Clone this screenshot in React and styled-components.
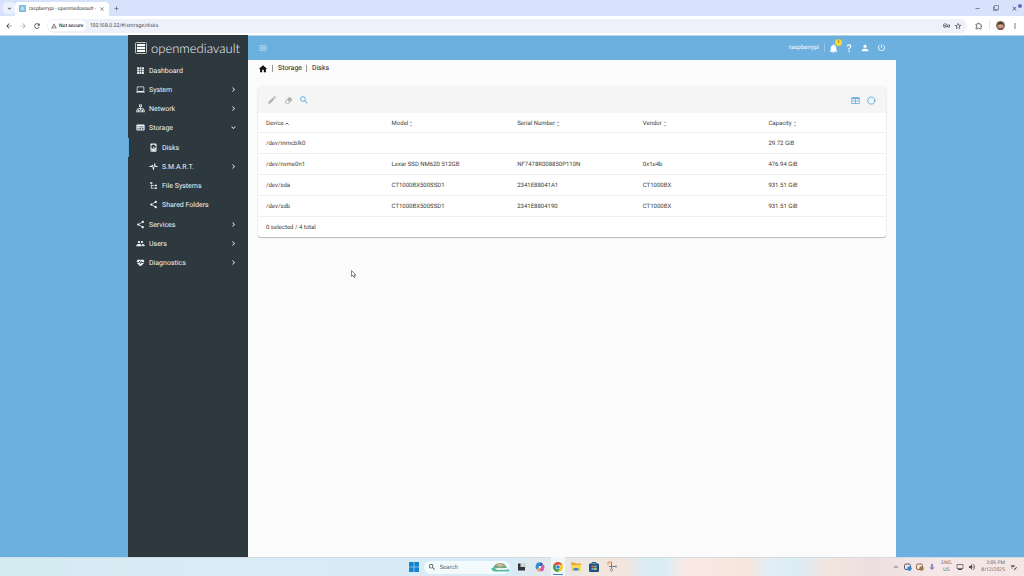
import React from "react";
import styled, { createGlobalStyle, css } from "styled-components";
import {
  MdShare, MdPeople, MdChevronRight, MdExpandMore, MdHome, MdEdit, MdSearch,
  MdNotifications, MdPerson, MdPowerSettingsNew, MdMenu, MdArrowBack,
  MdArrowForward, MdRefresh, MdStarBorder, MdMoreVert, MdExpandLess, MdClose,
  MdAdd, MdRemove, MdWarningAmber, MdOutlineExtension, MdOutlineVpnKey,
  MdQuestionMark, MdFilterNone, MdMicNone, MdVolumeUp, MdOutlineMonitor,
  MdOutlineEditNote,
} from "react-icons/md";

const GlobalStyle = createGlobalStyle`
  *, *::before, *::after { box-sizing: border-box; }
  body {
    margin: 0;
    font-family: Roboto, "Liberation Sans", sans-serif;
    font-size: 6px;
    color: #3c3c3c;
    text-rendering: geometricPrecision;
  }
  button, input { font: inherit; color: inherit; border: 0; background: none; padding: 0; margin: 0; text-rendering: inherit; }
  a { color: inherit; text-decoration: none; }
  svg { display: block; flex: none; }
`;

const Desktop = styled.div`
  display: flex;
  flex-direction: column;
  min-height: 100vh;
`;

/* ---------- Browser ---------- */
const TabStrip = styled.div`
  display: flex;
  align-items: center;
  height: 16px;
  background: #d9e2fd;
  padding: 0 3px;
`;

const TabMenu = styled.button`
  display: grid;
  place-items: center;
  width: 12px;
  height: 12px;
  border-radius: 4px;
  background: #edf1fe;
`;

const Tab = styled.div`
  display: flex;
  align-items: center;
  gap: 3px;
  min-width: 94px;
  height: 14px;
  align-self: flex-end;
  padding: 0 4px 1px 4px;
  background: #fff;
  border-radius: 4px 4px 0 0;
`;

const TabTitle = styled.span`
  flex: 1;
  white-space: nowrap;
  font: 5px/8px Roboto, sans-serif;
  color: #444;
`;

const NewTab = styled.button`
  margin-left: 4px;
  color: #444;
`;

const WindowControls = styled.div`
  display: flex;
  gap: 12px;
  margin-left: auto;
  padding-right: 3px;
  color: #333;
`;

const CloseControl = styled.button`
  position: relative;
  color: #3c4043;
  &::after {
    content: "";
    position: absolute;
    top: -1px;
    right: -4px;
    width: 4px;
    height: 4px;
    border-radius: 50%;
    background: #6466c8;
  }
`;

const Toolbar = styled.div`
  display: flex;
  align-items: center;
  gap: 6px;
  height: 19px;
  padding: 0 5px;
  background: #fff;
  color: #444;
`;

const ToolButton = styled.button`
  display: flex;
  color: ${(p) => (p.$dim ? "#aaa" : "#3c4043")};
`;

const Address = styled.div`
  display: flex;
  align-items: center;
  flex: 1;
  height: 14px;
  padding: 0 5px 0 1px;
  margin-right: 2px;
  gap: 4px;
  background: #eff1fa;
  border-radius: 7px;
`;

const Security = styled.button`
  display: flex;
  align-items: center;
  gap: 2px;
  height: 11px;
  padding: 0 3px;
  border-radius: 6px;
  background: #fff;
  font-weight: 500;
  font-size: 5px;
  color: #333;
`;

const Url = styled.input`
  flex: 1;
  min-width: 0;
  font: 5px/8px Inter, sans-serif;
  color: #4c4f55;
  outline: 0;
`;

const Avatar = styled.button`
  display: grid;
  width: 9px;
  height: 9px;
  border-radius: 50%;
  overflow: hidden;
`;

const ToolDivider = styled.span`
  width: 1px;
  height: 9px;
  background: #dde4f8;
`;

/* ---------- Application ---------- */
const Page = styled.div`
  display: flex;
  justify-content: center;
  flex: 1;
  background: linear-gradient(#b6d4e4 0 1px, #6bb0df 1px);
`;

const Workbench = styled.div`
  display: grid;
  grid-template-columns: 120px 1fr;
  width: 75%;
`;

const Sidebar = styled.nav`
  background: #2d383f;
  color: #f0f2f3;
`;

const Logo = styled.a`
  display: flex;
  align-items: center;
  gap: 4px;
  height: 26px;
  padding: 0 0 1px 7px;
  font: 300 13px/16px Lato, sans-serif;
  color: #f4f6f7;
`;

const NavItem = styled.a`
  display: flex;
  align-items: center;
  gap: 4px;
  height: 19px;
  padding: 0 10px 0 ${(p) => (p.$nested ? 20 : 7)}px;
  font-size: 7px;
  line-height: 10px;
  border-left: 1px solid ${(p) => (p.$active ? "#5dacdf" : "transparent")};
`;

const NavLabel = styled.span`
  flex: 1;
`;

const SubMenu = styled.div`
  padding: 1px 0;
`;

const Main = styled.div`
  display: flex;
  flex-direction: column;
  min-width: 0;
  background: #fbfbfb;
`;

const AppBar = styled.header`
  display: flex;
  align-items: center;
  height: 25px;
  padding: 0 10px;
  background: linear-gradient(#b6d4e4 0 1px, #6bb0df 1px);
  color: #fff;
`;

const AppActions = styled.div`
  display: flex;
  align-items: center;
  gap: 6px;
  margin-left: auto;
`;

const HostName = styled.span`
  padding-right: 5px;
  margin-right: -3px;
  border-right: 1px solid #93c6e8;
  line-height: 9px;
`;

const IconButton = styled.button`
  position: relative;
  display: grid;
  place-items: center;
  width: 10px;
  height: 10px;
  color: ${(p) => p.$color || "inherit"};
`;

const Badge = styled.span`
  position: absolute;
  top: -4px;
  right: -4px;
  width: 7px;
  height: 7px;
  border-radius: 50%;
  background: #f4d83b;
  color: #5a5320;
  font-size: 5px;
  line-height: 7px;
  text-align: center;
`;

const Breadcrumb = styled.nav`
  display: flex;
  align-items: center;
  height: 17px;
  padding-left: 10px;
  font-size: 7px;
  line-height: 9px;
  color: #222;
`;

const Crumb = styled.a`
  margin-left: 4px;
  padding-left: 5px;
  border-left: 1px solid #9a9a9a;
  line-height: 7px;
`;

const Card = styled.section`
  margin: 10px;
  background: #fff;
  border-radius: 3px;
  box-shadow: 0 1px 1px rgba(0, 0, 0, 0.24), 0 0 2px rgba(0, 0, 0, 0.1);
`;

const CardBar = styled.div`
  display: flex;
  align-items: center;
  gap: 6px;
  height: 26px;
  padding: 0 10px 0 9px;
  border-radius: 3px 3px 0 0;
  background: #f5f5f5;
`;

const Spacer = styled.span`
  flex: 1;
`;

const Table = styled.table`
  width: 100%;
  table-layout: fixed;
  border-collapse: separate;
  border-spacing: 0;
`;

const cell = css`
  padding: 2px 0 0 8px;
  text-align: left;
  white-space: nowrap;
  border-bottom: 1px solid #efefef;
  line-height: 8px;
  font-weight: 400;
`;

const HeadCell = styled.th`
  ${cell}
  height: 20px;
`;

const Cell = styled.td`
  ${cell}
  height: 21px;
`;

const SortButton = styled.button`
  display: flex;
  align-items: center;
  gap: 1px;
  height: 10px;
`;

const CardFooter = styled.div`
  height: 20px;
  padding-left: 8px;
  line-height: 22px;
`;

const Pointer = styled.svg`
  position: absolute;
  left: 351px;
  top: 270px;
`;

/* ---------- Taskbar ---------- */
const Taskbar = styled.footer`
  display: grid;
  grid-template-columns: 1fr auto 1fr;
  align-items: center;
  height: 19px;
  padding: 0 6px 0 7px;
  border-top: 1px solid #cfdde2;
  background: linear-gradient(90deg, #d3eaf1 0, #daecf6 20%, #d8ebf6 50%, #f3e5dc 59%, #f3e5dc 61%, #dcecf4 63%,
    #dcecf4 65%, #faeae6 67%, #f5e6dc 73%, #e4edf5 75%, #dcecf5 78%, #f4e5dc 81%, #eddfe0 85%, #f6e7e8 92%, #f5e6e3 100%);
`;

const Launchers = styled.div`
  grid-column: 2;
  display: flex;
  align-items: center;
  gap: 8px;
`;

const Launcher = styled.button`
  display: grid;
  place-items: center;
  width: 10px;
  height: 16px;
  border-bottom: 1px solid ${(p) => (p.$running ? "#3b87c9" : "transparent")};
  ${(p) => p.$running && css`
    background: #f0f6fa;
    box-shadow: 0 0 0 2px #f0f6fa;
  `}
`;

const SearchBox = styled.label`
  display: flex;
  align-items: center;
  gap: 4px;
  width: 86px;
  height: 13px;
  margin: 0 -1px 0 -3px;
  padding: 0 1px 0 4px;
  border-radius: 7px;
  background: #f3fafc;
  color: #333;
`;

const SearchInput = styled.input`
  flex: 1;
  min-width: 0;
  outline: 0;
  &::placeholder { color: #666; opacity: 1; }
`;

const Tray = styled.div`
  display: flex;
  align-items: center;
  justify-content: flex-end;
  gap: 4px;
  color: #4d4d55;
  font: 5px/7px "Open Sans", sans-serif;
`;

const TrayText = styled.span`
  text-align: ${(p) => p.$align || "center"};
  margin: 0 1px;
`;

/* ---------- Icons ---------- */
const Glyph = ({ d, size = 9 }) => (
  <svg width={size} height={size} viewBox="0 0 24 24" fill="currentColor" fillRule="evenodd" aria-hidden="true">
    <path d={d} />
  </svg>
);

const glyphs = {
  apps: "M16,21H21V16H16M16,14.5H21V9.5H16M9.500,8H14.500V3H9.500M16,8H21V3H16M9.500,14.500H14.500V9.500H9.500M3,14.500H8V9.500H3M3,21H8V16H3M9.500,21H14.500V16H9.500M3,8H8V3H3V8Z",
  laptop: "M4,6H20V16H4ZM20,18A2,2 0 0,0 22,16V6C22,4.9 21.1,4 20,4H4C2.9,4 2,4.9 2,6V16A2,2 0 0,0 4,18H0V20H24V18Z",
  network: "M8 1H16V8H13V11H20V15H23V22H15V15H18V13H13V15H16V22H8V15H11V13H6V15H9V22H1V15H4V11H11V8H8ZM10 3V6H14V3ZM3 17V20H6V17ZM10.5 17V20H13.5V17ZM18 17V20H21V17Z",
  storage: "M3 4H21A2 2 0 0 1 23 6V18A2 2 0 0 1 21 20H3A2 2 0 0 1 1 18V6A2 2 0 0 1 3 4ZM4 9V11H7V9ZM9 9V11H20V9ZM4 14V17H7V14ZM9 14V17H14V14ZM16 14V17H20V14Z",
  disk: "M6 1H18A2 2 0 0 1 20 3V21A2 2 0 0 1 18 23H6A2 2 0 0 1 4 21V3A2 2 0 0 1 6 1ZM12 4A6 6 0 0 0 6 10C6 13.3 8.7 16 12.1 16L11.2 13.8C10.8 12.9 11.1 12 11.8 11.6C12.5 11.2 13.5 11.4 14 12.2L15.7 14.7A6 6 0 0 0 12 4ZM12 9A1 1 0 1 1 12 11A1 1 0 0 1 12 9ZM6 18V20H9V18ZM12.5 13L16.5 20L18 19Z",
  pulse: "M1 10.500H6L8 7H10L12 15L14.5 3H16L18 10.500H23V13.500H16.5L15.3 9L12.8 21H11L8.7 11L7.4 13.500H1Z",
  tree: "M3,3H9V7H3V3M15,10H21V14H15V10M15,17H21V21H15V17M13,13H7V18H13V20H5V9H7V11H13V13Z",
  heart: "M7.5 4C9.3 4 11 5 12 6.3C13 5 14.7 4 16.5 4C19.5 4 22 6.4 22 9.5C22 10 21.9 10.5 21.8 11H17L15.5 8.6H14.2L12.5 13L10.8 7H9.5L7.3 11H2.2C2.1 10.5 2 10 2 9.5C2 6.4 4.5 4 7.5 4ZM3 13H8.2L9.8 10.3L11.5 16H13L15 11.2L16.2 13H21C19.5 15.9 16 18.6 12 22C8 18.6 4.5 15.9 3 13Z",
  eraser: "M16.24,3.56L21.19,8.5C21.97,9.29 21.97,10.55 21.19,11.34L12,20.53C10.44,22.09 7.91,22.09 6.34,20.53L2.81,17C2.03,16.21 2.03,14.95 2.81,14.16L13.41,3.56C14.2,2.78 15.46,2.78 16.24,3.56M4.22,15.58L7.76,19.11C8.54,19.9 9.8,19.9 10.59,19.11L14.12,15.58L9.17,10.63L4.22,15.58Z",
  table: "M3 3H21A2 2 0 0 1 23 5V19A2 2 0 0 1 21 21H3A2 2 0 0 1 1 19V5A2 2 0 0 1 3 3ZM3 8V12H11V8ZM13 8V12H21V8ZM3 14V19H11V14ZM13 14V19H21V14Z",
};

const LogoMark = () => (
  <svg width="12" height="12" viewBox="0 0 12 12" aria-hidden="true">
    <rect x="0.5" y="0.5" width="11" height="11" rx="1" fill="none" stroke="#bcc3c6" />
    <path d="M2 2H10V4.300H2ZM2 5H10V7H2ZM2 7.700H10V10H2Z" fill="#fff" />
  </svg>
);

const ReloadIcon = () => (
  <svg width="9" height="9" viewBox="0 0 24 24" aria-hidden="true">
    <path d="M21 12A9.500 9.500 0 1 1 17 4.500Q20 7 20.500 10" fill="none" stroke="currentColor" strokeWidth="2.500" />
    <path d="M17.500 10H24L20.800 14.500Z" fill="currentColor" />
  </svg>
);

const SortMark = ({ active }) => (
  <svg width="4" height="6" viewBox="0 0 4 6" aria-hidden="true">
    {active ? (
      <path d="M0.500 3.500L2 2L3.500 3.500" fill="none" stroke="#333" strokeWidth="0.800" />
    ) : (
      <path d="M1 1.800L2 0.800L3 1.800M1 4.200L2 5.200L3 4.200" fill="none" stroke="#777" strokeWidth="0.700" />
    )}
  </svg>
);

const WindowsIcon = () => (
  <svg width="10" height="10" viewBox="0 0 10 10" aria-hidden="true">
    <path d="M0 0H4.700V4.700H0ZM5.300 0H10V4.700H5.300ZM0 5.300H4.700V10H0ZM5.300 5.300H10V10H5.300Z" fill="#1583ce" />
  </svg>
);

const SceneIcon = () => (
  <svg width="18" height="10" viewBox="0 0 18 10" aria-hidden="true">
    <path d="M2 6Q4 1 9 1Q14 1 16 6Z" fill="#74a889" />
    <path d="M5 3L9 1L13 4L9 5Z" fill="#d9b690" />
    <path d="M0 6.500Q4 4.500 9 6.500T18 7V9.500H4Q1 9 0 6.500Z" fill="#55bba4" />
    <path d="M4 6H12L14 8H6Z" fill="#e8eee2" />
  </svg>
);

const TaskViewIcon = () => (
  <svg width="9" height="9" viewBox="0 0 9 9" aria-hidden="true">
    <path d="M3 1H9V6H3Z" fill="#d4d4d4" />
    <path d="M1 1.500H3.500V5H8V8.500H1Z" fill="#303236" />
  </svg>
);

const CopilotIcon = () => (
  <svg width="10" height="10" viewBox="0 0 10 10" aria-hidden="true">
    <path d="M3 0.500H6.500L5 4L2.500 7.500Q0.500 7.500 0.500 5.500Q1 1 3 0.500Z" fill="#2b8fd8" />
    <path d="M6 0.500Q7.500 0.500 8 2.500L6.500 4H4.500L5 2Z" fill="#2361b5" />
    <path d="M7 2.500Q9.500 2.500 9.500 4.500Q9 9 7 9.500L4.500 9L6 4Z" fill="#d45cae" />
    <path d="M2 6.500H5.500L5 8.500Q4.500 9.500 3.500 9.500Q2.200 9.500 2 6.500Z" fill="#eea13b" />
    <path d="M4.200 4H6L5.500 6H3.700Z" fill="#fff" />
  </svg>
);

const ChromeIcon = () => (
  <svg width="10" height="10" viewBox="0 0 10 10" aria-hidden="true">
    <circle cx="5" cy="5" r="5" fill="#f7c92e" />
    <path d="M5 5L0.700 2.500A5 5 0 0 1 9.300 2.500H5Z" fill="#df4a3d" />
    <path d="M5 5L0.700 2.500A5 5 0 0 0 5 10L7 6Z" fill="#38a35a" />
    <circle cx="5" cy="5" r="2.300" fill="#fff" />
    <circle cx="5" cy="5" r="1.800" fill="#3b7de0" />
  </svg>
);

const FolderIcon = () => (
  <svg width="10" height="9" viewBox="0 0 10 9" aria-hidden="true">
    <path d="M0 0.500H4L5 1.500H10V8.500H0Z" fill="#e9ad32" />
    <path d="M0 3H10V8.500H0Z" fill="#fbd561" />
    <path d="M2.500 6H7.500V8.500H2.500Z" fill="#3b8fd1" />
  </svg>
);

const StoreIcon = () => (
  <svg width="10" height="10" viewBox="0 0 10 10" aria-hidden="true">
    <path d="M3 2V0.500H7V2" fill="none" stroke="#24659b" />
    <rect y="1.500" width="10" height="8.500" rx="1" fill="#1d5184" />
    <path d="M2.500 3.500H4.700V5.500H2.500Z" fill="#eb6545" />
    <path d="M5.300 3.500H7.500V5.500H5.300Z" fill="#8fc750" />
    <path d="M2.500 6H4.700V8H2.500Z" fill="#4bb5ee" />
    <path d="M5.300 6H7.500V8H5.300Z" fill="#f7ce4a" />
  </svg>
);

const SnipIcon = () => (
  <svg width="10" height="11" viewBox="0 0 10 11" fill="none" aria-hidden="true">
    <path d="M1 4V1H4.500" stroke="#d8955f" />
    <path d="M4.500 1V5.500H9M4.500 5.500V8M2 5.500H4" stroke="#65839a" />
    <circle cx="4.500" cy="9" r="1.200" stroke="#788996" strokeWidth="0.800" />
    <circle cx="9" cy="5.500" r="0.800" stroke="#788996" strokeWidth="0.800" />
  </svg>
);

const CloudTray = ({ dot, color }) => (
  <svg width="8" height="8" viewBox="0 0 8 8" aria-hidden="true">
    <rect x="0.500" y="1" width="6" height="5.500" rx="1.500" fill="none" stroke={color} />
    <circle cx="5.500" cy="5.500" r="2.200" fill={dot} />
  </svg>
);

const AvatarArt = () => (
  <svg width="9" height="9" viewBox="0 0 9 9" aria-hidden="true">
    <rect width="9" height="9" fill="#7c7567" />
    <circle cx="4.500" cy="4.500" r="2.500" fill="#d4a083" />
    <path d="M1.500 4Q2 1 4.500 1T7.500 4Q5 2.500 1.500 4Z" fill="#4c3429" />
    <path d="M1 9Q4.500 5 8 9Z" fill="#8b4a3c" />
  </svg>
);

/* ---------- Data ---------- */
const topItems = [
  { label: "Dashboard", icon: <Glyph d={glyphs.apps} /> },
  { label: "System", icon: <Glyph d={glyphs.laptop} />, more: true },
  { label: "Network", icon: <Glyph d={glyphs.network} />, more: true },
  { label: "Storage", icon: <Glyph d={glyphs.storage} />, open: true },
];
const storageItems = [
  { label: "Disks", icon: <Glyph d={glyphs.disk} />, active: true },
  { label: "S.M.A.R.T.", icon: <Glyph d={glyphs.pulse} />, more: true },
  { label: "File Systems", icon: <Glyph d={glyphs.tree} /> },
  { label: "Shared Folders", icon: <MdShare size={9} /> },
];
const bottomItems = [
  { label: "Services", icon: <MdShare size={9} />, more: true },
  { label: "Users", icon: <MdPeople size={9} />, more: true },
  { label: "Diagnostics", icon: <Glyph d={glyphs.heart} />, more: true },
];
const columns = ["Device", "Model", "Serial Number", "Vendor", "Capacity"];
const disks = [
  ["/dev/mmcblk0", "", "", "", "29.72 GiB"],
  ["/dev/nvme0n1", "Lexar SSD NM620 512GB", "NF7478R008850P110N", "0x1e4b", "476.94 GiB"],
  ["/dev/sda", "CT1000BX500SSD1", "2341E88041A1", "CT1000BX", "931.51 GiB"],
  ["/dev/sdb", "CT1000BX500SSD1", "2341E8804190", "CT1000BX", "931.51 GiB"],
];

const NavList = ({ items, nested }) =>
  items.map((item) => (
    <NavItem key={item.label} href="#" $nested={nested} $active={item.active}>
      {item.icon}
      <NavLabel>{item.label}</NavLabel>
      {item.more && <MdChevronRight size={9} />}
      {item.open && <MdExpandMore size={9} />}
    </NavItem>
  ));

export default function App() {
  return (
    <Desktop>
      <GlobalStyle />
      <TabStrip>
        <TabMenu aria-label="Search tabs"><MdExpandMore size={7} /></TabMenu>
        <Tab>
          <svg width="7" height="7" viewBox="0 0 7 7" aria-hidden="true">
            <rect width="7" height="7" rx="1" fill="#75b6df" />
            <path d="M1.500 1.500H5.500V5.500H1.500Z" fill="#b8dcec" />
          </svg>
          <TabTitle>raspberrypi - openmediavault -</TabTitle>
          <ToolButton aria-label="Close tab"><MdClose size={6} /></ToolButton>
        </Tab>
        <NewTab aria-label="New tab"><MdAdd size={7} /></NewTab>
        <WindowControls>
          <ToolButton aria-label="Minimize"><MdRemove size={7} /></ToolButton>
          <ToolButton aria-label="Restore"><MdFilterNone size={6} /></ToolButton>
          <CloseControl aria-label="Close"><MdClose size={7} /></CloseControl>
        </WindowControls>
      </TabStrip>
      <Toolbar>
        <ToolButton aria-label="Back"><MdArrowBack size={8} /></ToolButton>
        <ToolButton aria-label="Forward" $dim><MdArrowForward size={8} /></ToolButton>
        <ToolButton aria-label="Reload"><MdRefresh size={8} /></ToolButton>
        <Address>
          <Security><MdWarningAmber size={6} />Not secure</Security>
          <Url aria-label="Address" defaultValue="192.168.0.22/#/storage/disks" />
          <ToolButton aria-label="Passwords"><MdOutlineVpnKey size={7} /></ToolButton>
          <ToolButton aria-label="Bookmark"><MdStarBorder size={8} /></ToolButton>
        </Address>
        <ToolButton aria-label="Extensions"><MdOutlineExtension size={8} /></ToolButton>
        <ToolDivider />
        <Avatar aria-label="Profile"><AvatarArt /></Avatar>
        <ToolButton aria-label="Menu"><MdMoreVert size={8} /></ToolButton>
      </Toolbar>

      <Page>
        <Workbench>
          <Sidebar>
            <Logo href="#"><LogoMark />openmediavault</Logo>
            <NavList items={topItems} />
            <SubMenu><NavList items={storageItems} nested /></SubMenu>
            <NavList items={bottomItems} />
          </Sidebar>
          <Main>
            <AppBar>
              <IconButton aria-label="Toggle navigation" $color="#d3e8f5"><MdMenu size={10} /></IconButton>
              <AppActions>
                <HostName>raspberrypi</HostName>
                <IconButton aria-label="Notifications"><MdNotifications size={11} /><Badge>1</Badge></IconButton>
                <IconButton aria-label="Help"><MdQuestionMark size={10} /></IconButton>
                <IconButton aria-label="User"><MdPerson size={10} /></IconButton>
                <IconButton aria-label="Power"><MdPowerSettingsNew size={9} /></IconButton>
              </AppActions>
            </AppBar>
            <Breadcrumb aria-label="Breadcrumb">
              <a href="#" aria-label="Home"><MdHome size={10} color="#111" /></a>
              <Crumb href="#">Storage</Crumb>
              <Crumb href="#">Disks</Crumb>
            </Breadcrumb>
            <Card>
              <CardBar>
                <IconButton aria-label="Edit" $color="#b0b0b0"><MdEdit size={10} /></IconButton>
                <IconButton aria-label="Wipe" $color="#b0b0b0"><Glyph d={glyphs.eraser} /></IconButton>
                <IconButton aria-label="Scan" $color="#5dacdf"><MdSearch size={10} /></IconButton>
                <Spacer />
                <IconButton aria-label="Columns" $color="#5dacdf"><Glyph d={glyphs.table} /></IconButton>
                <IconButton aria-label="Reload list" $color="#5dacdf"><ReloadIcon /></IconButton>
              </CardBar>
              <Table>
                <thead>
                  <tr>
                    {columns.map((name, i) => (
                      <HeadCell key={name} scope="col">
                        <SortButton>{name}<SortMark active={i === 0} /></SortButton>
                      </HeadCell>
                    ))}
                  </tr>
                </thead>
                <tbody>
                  {disks.map((row) => (
                    <tr key={row[0]}>
                      {row.map((value, i) => <Cell key={columns[i]}>{value}</Cell>)}
                    </tr>
                  ))}
                </tbody>
              </Table>
              <CardFooter>0 selected / 4 total</CardFooter>
            </Card>
          </Main>
        </Workbench>
      </Page>

      <Taskbar>
        <Launchers>
          <Launcher aria-label="Start"><WindowsIcon /></Launcher>
          <SearchBox>
            <MdSearch size={8} />
            <SearchInput aria-label="Search" placeholder="Search" />
            <SceneIcon />
          </SearchBox>
          <Launcher aria-label="Task view"><TaskViewIcon /></Launcher>
          <Launcher aria-label="Copilot"><CopilotIcon /></Launcher>
          <Launcher aria-label="Chrome" $running><ChromeIcon /></Launcher>
          <Launcher aria-label="File Explorer"><FolderIcon /></Launcher>
          <Launcher aria-label="Store"><StoreIcon /></Launcher>
          <Launcher aria-label="Snipping Tool"><SnipIcon /></Launcher>
        </Launchers>
        <Tray>
          <MdExpandLess size={8} />
          <CloudTray color="#52606e" dot="#3189ce" />
          <CloudTray color="#896b4a" dot="#9b7938" />
          <MdMicNone size={8} color="#4a5aa8" />
          <TrayText>ENG<br />US</TrayText>
          <MdOutlineMonitor size={8} />
          <MdVolumeUp size={8} />
          <TrayText $align="right">3:05 PM<br />8/12/2025</TrayText>
          <MdOutlineEditNote size={8} />
        </Tray>
      </Taskbar>

      <Pointer width="6" height="8" viewBox="0 0 6 8" aria-hidden="true">
        <path d="M0.500 0.500V6.500L2 5.200L3 7.500L4 7L3 5H5Z" fill="#fff" stroke="#555" strokeWidth="0.700" />
      </Pointer>
    </Desktop>
  );
}
